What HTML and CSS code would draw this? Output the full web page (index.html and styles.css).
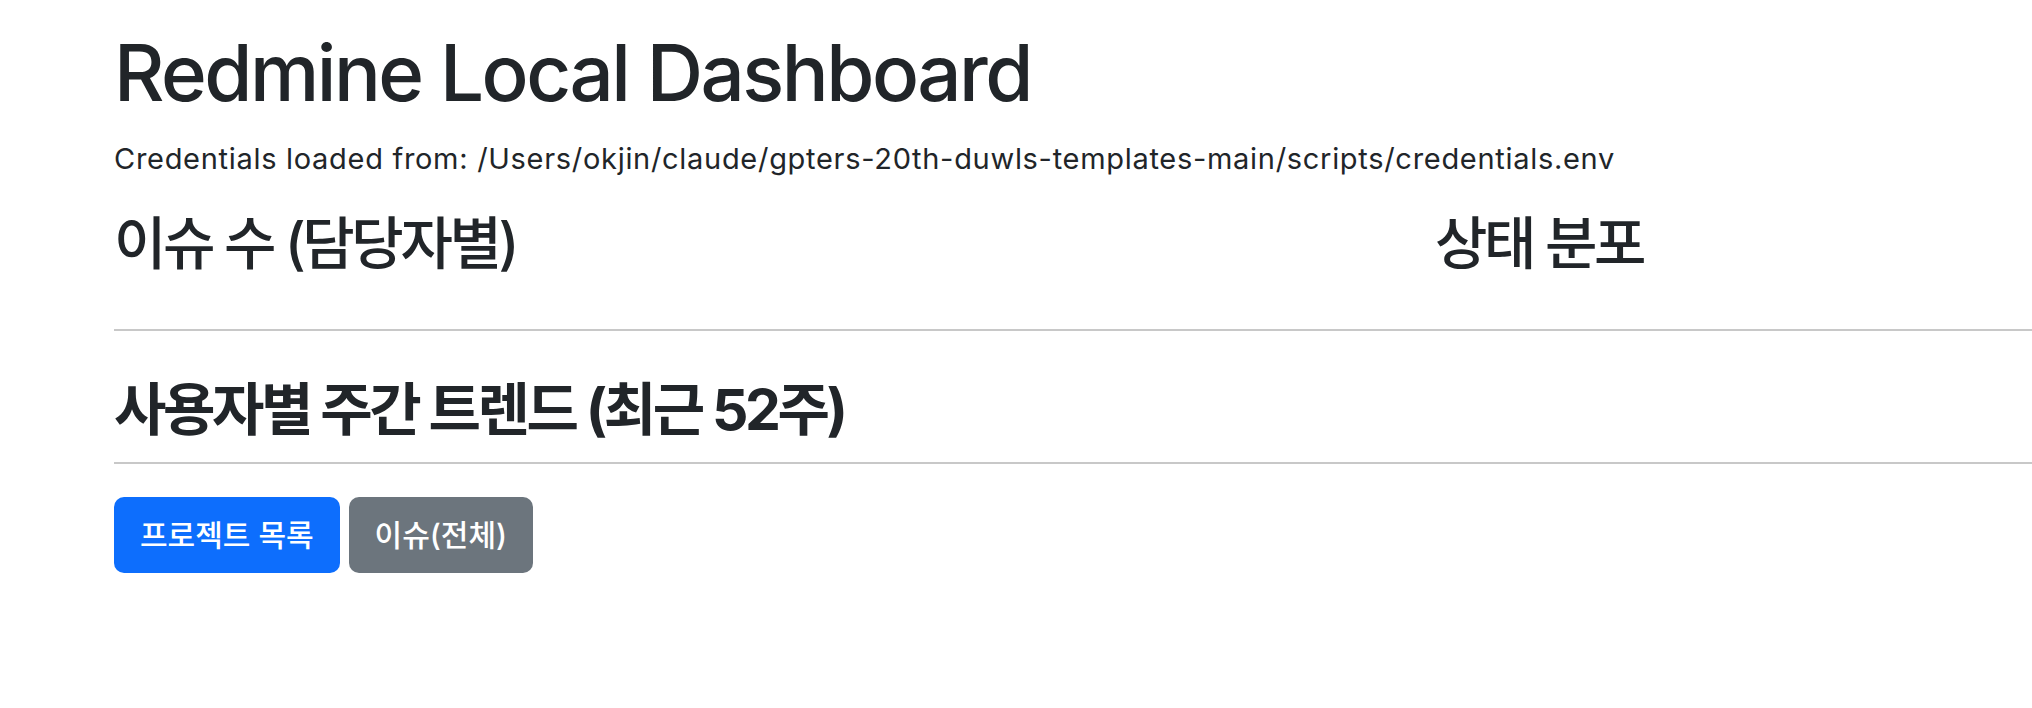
FILE: index.html
```html
<!DOCTYPE html>
<html lang="ko">
<head>
  <meta charset="UTF-8">
  <meta name="viewport" content="width=device-width, initial-scale=1.0">
  <title>Redmine Local Dashboard</title>
  <link rel="stylesheet" href="styles.css">
</head>
<body>
  <div class="container">
    <h1>Redmine Local Dashboard</h1>
    <p class="source">Credentials loaded from: /Users/okjin/claude/gpters-20th-duwls-templates-main/scripts/credentials.env</p>

    <div class="row">
      <div class="col-main">
        <h3>이슈 수 (담당자별)</h3>
        <div id="chart-assignee" class="chart"></div>
      </div>
      <div class="col-side">
        <h3>상태 분포</h3>
        <div id="chart-status" class="chart"></div>
      </div>
    </div>

    <hr class="sep-top">

    <h3 class="trend-title">사용자별 주간 트렌드 (최근 52주)</h3>
    <div id="chart-trend" class="chart"></div>

    <hr class="sep-bottom">

    <div class="actions">
      <a href="#" class="btn btn-primary">프로젝트 목록</a>
      <a href="#" class="btn btn-secondary">이슈(전체)</a>
    </div>
  </div>
</body>
</html>
```

FILE: styles.css
```css
body {
  margin: 0;
  font-family: Inter, "Noto Sans CJK KR", sans-serif;
  color: #212529;
  background-color: white;
}
.container {
  padding-left: 114px;
}
h1 {
  font-size: 78px;
  font-weight: 500;
  line-height: 1.2;
  margin: 26px 0 0 0;
  letter-spacing: -2.5px;
}
.source {
  font-size: 29px;
  line-height: 1.5;
  margin: 17px 0 0 0;
  letter-spacing: 0.7px;
}
.row {
  display: grid;
  grid-template-columns: 1321px 1fr;
}
h3 {
  font-size: 57px;
  font-weight: 500;
  line-height: 1.2;
  margin: 30px 0 0 0;
  letter-spacing: -3.4px;
}
.chart {
  height: 0;
}
hr {
  border: none;
  border-top: 2px solid #c8c8c8;
  margin: 0;
}
.sep-top {
  margin-top: 51px;
}
.sep-bottom {
  margin-top: 17px;
}
.trend-title {
  font-weight: 700;
  margin-top: 45px;
}
.actions {
  display: flex;
  gap: 9px;
  margin-top: 33px;
}
.btn {
  display: inline-block;
  padding: 0 26px;
  height: 76px;
  line-height: 76px;
  font-size: 30px;
  font-weight: 500;
  color: white;
  text-decoration: none;
  border-radius: 10px;
}
.btn-primary {
  background-color: #0d6efd;
}
.btn-secondary {
  background-color: #6c757d;
}
```
